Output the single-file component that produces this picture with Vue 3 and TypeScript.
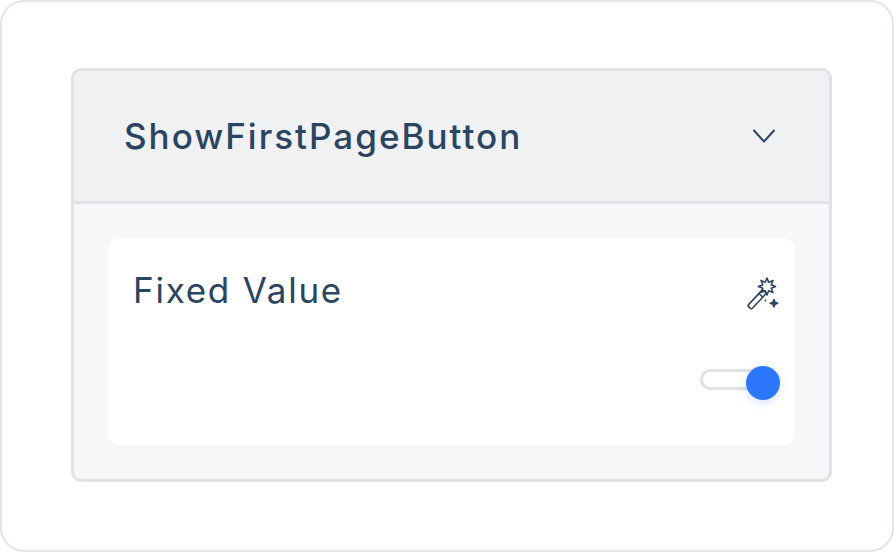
<script setup lang="ts">
import { ref } from 'vue'

const fixedValue = ref(true)
</script>

<template>
	<div class="frame">
		<section class="panel">
			<header class="panelHeader">
				<h2 class="panelTitle">ShowFirstPageButton</h2>
				<svg class="chevron" width="24" height="24" viewBox="0 0 24 24" fill="none">
					<path d="M2 6.5 12 17.5 22 6.5" stroke="#2f4560" stroke-width="2" stroke-linecap="round" stroke-linejoin="round" />
				</svg>
			</header>
			<div class="panelBody">
				<div class="field">
					<div class="fieldTop">
						<span class="fieldLabel">Fixed Value</span>
						<svg class="wand" width="34" height="34" viewBox="0 0 34 34" fill="none" stroke="#2f4560" stroke-width="1.6" stroke-linecap="round" stroke-linejoin="round">
							<path d="M2.6 27.6 15.6 13.6a1.5 1.5 0 0 1 2.2 0l1.6 1.5a1.5 1.5 0 0 1 0 2.2L6.4 31.2a1.5 1.5 0 0 1-2.2 0l-1.6-1.5a1.5 1.5 0 0 1 0-2.1Z" />
							<path d="M13 16.6 16.6 20" />
							<path d="M29.5 9.5 25.2 11.2 27 15.5 22.7 13.7 21 18 19.3 13.7 15 15.5 16.8 11.2 12.5 9.5 16.8 7.8 15 3.5 19.3 5.3 21 1 22.7 5.3 27 3.5 25.2 7.8Z" />
							<path d="M28 22.5l1 2.7 2.7 1-2.7 1-1 2.7-1-2.7-2.7-1 2.7-1Z" fill="#2f4560" />
							<circle cx="19.5" cy="23.5" r="1" fill="#2f4560" stroke="none" />
						</svg>
					</div>
					<div class="fieldBottom">
						<button class="toggle" :class="{ on: fixedValue }" type="button" @click="fixedValue = !fixedValue">
							<span class="knob"></span>
						</button>
					</div>
				</div>
			</div>
		</section>
	</div>
</template>

<style scoped>
.frame {
	box-sizing: border-box;
	display: flex;
	align-items: flex-start;
	justify-content: flex-start;
	width: 894px;
	height: 552px;
	padding: 66px 0 0 69px;
	background-color: #fff;
	border: 2px solid #e2e4e9;
	border-radius: 24px;
	font-family: Inter, "Liberation Sans", sans-serif;
}
.panel {
	box-sizing: border-box;
	display: flex;
	flex-direction: column;
	width: 761px;
	height: 414px;
	background-color: #f6f7f9;
	border: 3px solid #e0e2e7;
	border-radius: 10px;
	overflow: hidden;
}
.panelHeader {
	box-sizing: border-box;
	display: flex;
	flex-shrink: 0;
	align-items: center;
	justify-content: space-between;
	height: 133px;
	padding: 0 53px 0 50px;
	background-color: #f0f1f3;
	border-bottom: 3px solid #e0e2e7;
}
.panelTitle {
	margin: 0;
	font-size: 35px;
	font-weight: 500;
	letter-spacing: 2px;
	color: #2b4460;
}
.panelBody {
	flex: 1;
	padding: 34px 34px 33px 34px;
}
.field {
	box-sizing: border-box;
	display: flex;
	flex-direction: column;
	justify-content: space-between;
	height: 207px;
	padding: 32px 15px 55px 25px;
	background-color: #fff;
	border-radius: 12px;
}
.fieldTop {
	display: flex;
	align-items: flex-start;
	justify-content: space-between;
}
.fieldLabel {
	font-size: 35px;
	line-height: 40px;
	letter-spacing: 1.75px;
	color: #2b4460;
}
.wand {
	margin-top: 7px;
}
.fieldBottom {
	display: flex;
	justify-content: flex-end;
}
.toggle {
	position: relative;
	box-sizing: border-box;
	width: 80px;
	height: 21px;
	padding: 0;
	margin: 0;
	background-color: #fff;
	border: 3px solid #dfe1e6;
	border-radius: 11px;
	cursor: pointer;
}
.knob {
	position: absolute;
	top: -6px;
	left: -3px;
	width: 34px;
	height: 34px;
	background-color: #2c76fb;
	border-radius: 50%;
	box-shadow: 0 2px 10px rgba(44, 118, 251, 0.22);
}
.toggle.on .knob {
	left: auto;
	right: -3px;
}
</style>
